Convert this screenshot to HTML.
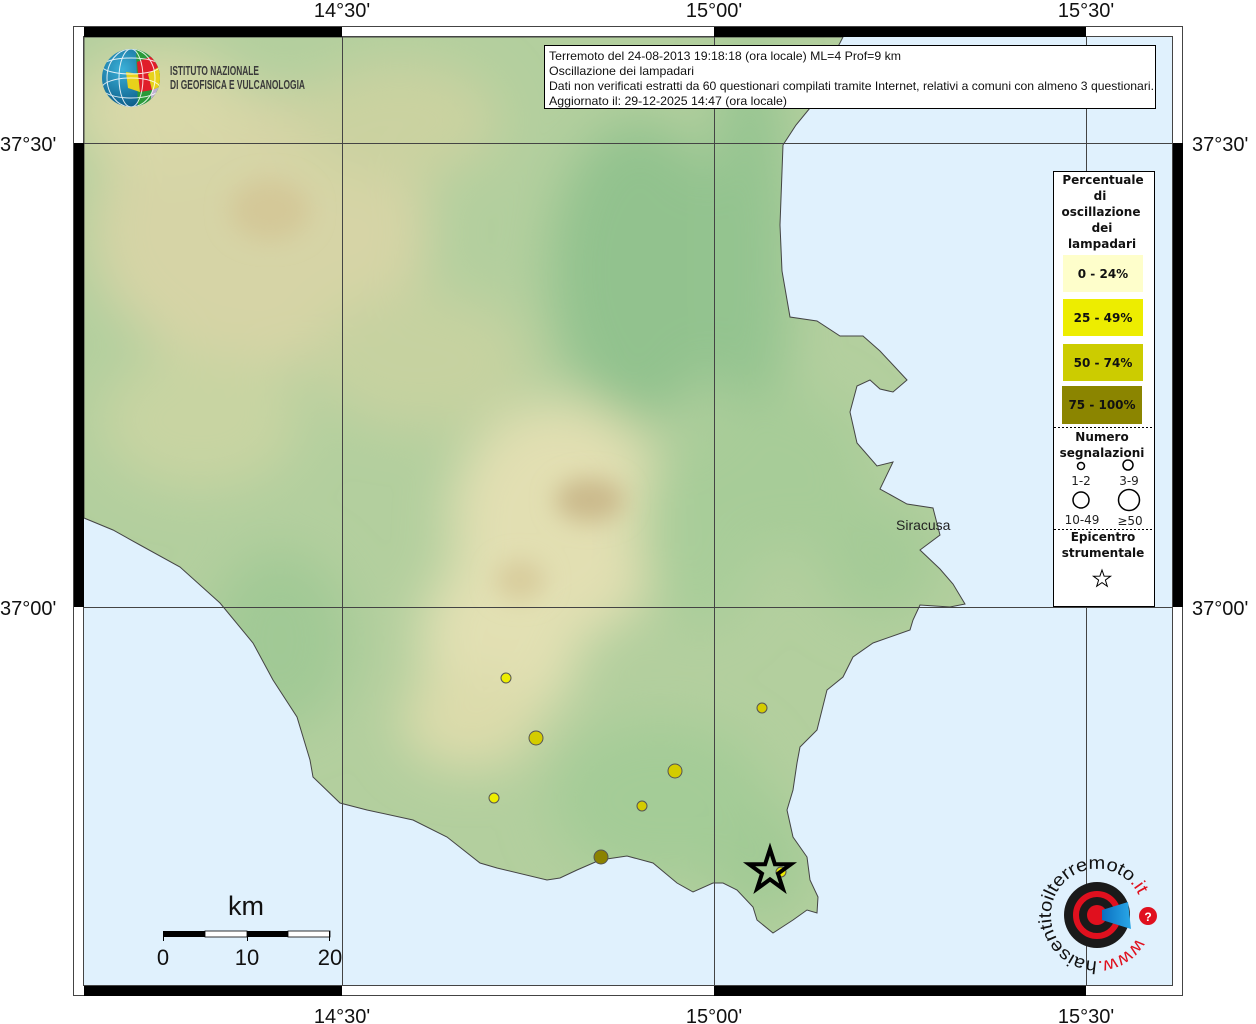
<!DOCTYPE html>
<html><head><meta charset="utf-8"><style>
html,body{margin:0;padding:0;background:#fff;}
svg{display:block;}
text{font-family:"Liberation Sans","DejaVu Sans",sans-serif;}
.dj text{font-family:"DejaVu Sans",sans-serif;}
</style></head><body>
<svg width="1256" height="1024" viewBox="0 0 1256 1024" xmlns="http://www.w3.org/2000/svg">
<defs>
<clipPath id="land"><path id="landp" d="M84,37 L843,37 L826,70 L810,108 L796,125 L783,145 L780,225 L782,271 L790,317 L817,321 L840,336 L863,336 L880,351 L907,380 L893,392 L880,389 L870,380 L857,386 L850,412 L857,443 L877,466 L893,462 L880,489 L907,504 L933,508 L940,535 L920,550 L940,569 L953,584 L965,604 L950,607 L920,605 L913,620 L910,630 L873,643 L853,657 L843,677 L827,690 L817,730 L800,747 L797,763 L793,790 L787,810 L793,837 L807,857 L810,880 L818,897 L817,913 L807,910 L793,920 L773,933 L757,920 L753,907 L737,890 L723,883 L713,883 L693,892 L677,883 L653,863 L627,856 L600,860 L577,870 L560,878 L547,880 L497,868 L480,863 L447,837 L413,820 L367,810 L340,803 L313,777 L310,760 L297,717 L273,680 L253,643 L220,603 L180,567 L140,545 L113,530 L84,518 Z"/></clipPath>
<filter id="bl" x="-50%" y="-50%" width="200%" height="200%"><feGaussianBlur stdDeviation="25"/></filter>
<filter id="bl2" x="-50%" y="-50%" width="200%" height="200%"><feGaussianBlur stdDeviation="12"/></filter>
<radialGradient id="globe" cx="35%" cy="35%" r="70%"><stop offset="0" stop-color="#3bb0d8"/><stop offset="1" stop-color="#0a5a86"/></radialGradient>
<linearGradient id="cone" x1="0" y1="0" x2="1" y2="0"><stop offset="0" stop-color="#0a6fc0"/><stop offset="1" stop-color="#2aa8e8"/></linearGradient>
<path id="ring" d="M1137,938 A46,46 0 1 1 1057,892 A46,46 0 1 1 1137,938"/>
</defs>
<rect x="84" y="37" width="1089" height="949" fill="#e0f1fd"/>
<g clip-path="url(#land)">
<rect x="84" y="37" width="950" height="950" fill="#b3cf9e"/>
<g filter="url(#bl)">
<ellipse cx="260" cy="230" rx="170" ry="140" fill="#d6d4a6"/>
<ellipse cx="160" cy="110" rx="90" ry="60" fill="#d8d8a8"/>
<ellipse cx="400" cy="120" rx="100" ry="60" fill="#cad2a0"/>
<ellipse cx="640" cy="270" rx="90" ry="150" fill="#92c28e"/>
<ellipse cx="750" cy="260" rx="40" ry="220" fill="#94c490"/>
<ellipse cx="420" cy="360" rx="110" ry="70" fill="#c6d2a0"/>
<ellipse cx="200" cy="420" rx="100" ry="70" fill="#c8d4a2"/>
<ellipse cx="560" cy="520" rx="110" ry="120" fill="#e2dfb2"/>
<ellipse cx="500" cy="640" rx="80" ry="90" fill="#e2e0b3"/>
<ellipse cx="470" cy="720" rx="70" ry="50" fill="#dcdbab"/>
<ellipse cx="280" cy="640" rx="70" ry="90" fill="#a1c995"/>
<ellipse cx="700" cy="530" rx="60" ry="100" fill="#a9cd9a"/>
<ellipse cx="780" cy="470" rx="90" ry="80" fill="#a7cc98"/>
<ellipse cx="660" cy="800" rx="110" ry="80" fill="#a4cc97"/>
<ellipse cx="760" cy="860" rx="50" ry="60" fill="#a2ca95"/>
<ellipse cx="880" cy="560" rx="60" ry="60" fill="#a5cb97"/>
</g>
<g filter="url(#bl2)">
<ellipse cx="590" cy="500" rx="35" ry="22" fill="#cbba8c"/>
<ellipse cx="270" cy="210" rx="40" ry="30" fill="#d4c898"/>
<ellipse cx="520" cy="580" rx="25" ry="20" fill="#d8cc9c"/>
</g>
</g>
<use href="#landp" fill="none" stroke="#444" stroke-width="1"/>
<g stroke="#444" stroke-width="1">
<line x1="342.5" y1="37" x2="342.5" y2="986"/><line x1="714.5" y1="37" x2="714.5" y2="986"/><line x1="1086.5" y1="37" x2="1086.5" y2="986"/>
<line x1="84" y1="143.5" x2="1173" y2="143.5"/><line x1="84" y1="607.5" x2="1173" y2="607.5"/>
</g>
<rect x="73.5" y="26.5" width="1109" height="969" fill="none" stroke="#444"/>
<rect x="83.5" y="36.5" width="1089" height="949" fill="none" stroke="#444"/>
<g fill="#000">
<rect x="84" y="27" width="258" height="10"/><rect x="714" y="27" width="372" height="10"/>
<rect x="84" y="986" width="258" height="10"/><rect x="714" y="986" width="372" height="10"/>
<rect x="74" y="143" width="10" height="464"/><rect x="1173" y="143" width="10" height="464"/>
</g>
<g font-size="20" fill="#111" text-anchor="middle">
<text x="342" y="17">14°30'</text><text x="714" y="17">15°00'</text><text x="1086" y="17">15°30'</text>
<text x="342" y="1023">14°30'</text><text x="714" y="1023">15°00'</text><text x="1086" y="1023">15°30'</text>
</g>
<g font-size="20" fill="#111">
<text x="0" y="151">37°30'</text><text x="0" y="615">37°00'</text>
<text x="1192" y="151">37°30'</text><text x="1192" y="615">37°00'</text>
</g>
<g>
<circle cx="131" cy="78" r="29" fill="url(#globe)"/>
<clipPath id="gc"><circle cx="131" cy="78" r="29"/></clipPath>
<g clip-path="url(#gc)">
<path d="M136,49 L160,52 L160,104 L138,110 Z" fill="#2a9a3a"/>
<path d="M137,62 L152,56 L160,66 L148,74 L138,74 Z" fill="#e01d2a"/>
<path d="M138,74 L148,74 L152,90 L140,92 Z" fill="#e01d2a"/>
<path d="M148,74 L160,66 L162,86 L152,90 Z" fill="#e8d21a"/>
<path d="M152,56 L162,58 L162,66 L160,66 Z" fill="#b7a4c8"/>
<path d="M152,90 L162,86 L162,100 L150,104 Z" fill="#c0b0d0"/>
<path d="M126,72 L138,74 L140,92 L128,88 Z" fill="#e8d21a"/>
</g>
<g fill="none" stroke="#fff" stroke-width="1" opacity="0.85" clip-path="url(#gc)">
<ellipse cx="131" cy="78" rx="12" ry="29"/><ellipse cx="131" cy="78" rx="24" ry="29"/>
<ellipse cx="131" cy="66" rx="29" ry="8"/><ellipse cx="131" cy="88" rx="29" ry="10"/>
</g>
<text x="170" y="75" font-size="13" font-weight="bold" fill="#3a3a3a" textLength="89" lengthAdjust="spacingAndGlyphs">ISTITUTO NAZIONALE</text>
<text x="170" y="89" font-size="13" font-weight="bold" fill="#3a3a3a" textLength="135" lengthAdjust="spacingAndGlyphs">DI GEOFISICA E VULCANOLOGIA</text>
</g>
<rect x="544.5" y="45.5" width="611" height="63" fill="#fff" stroke="#000"/>
<g font-size="12" fill="#111">
<text x="549" y="60" textLength="352" lengthAdjust="spacingAndGlyphs">Terremoto del 24-08-2013 19:18:18 (ora locale) ML=4 Prof=9 km</text>
<text x="549" y="75" textLength="145" lengthAdjust="spacingAndGlyphs">Oscillazione dei lampadari</text>
<text x="549" y="90" textLength="605" lengthAdjust="spacingAndGlyphs">Dati non verificati estratti da 60 questionari compilati tramite Internet, relativi a comuni con almeno 3 questionari.</text>
<text x="549" y="105" textLength="238" lengthAdjust="spacingAndGlyphs">Aggiornato il: 29-12-2025 14:47 (ora locale)</text>
</g>
<text x="896" y="530" font-size="14" fill="#222">Siracusa</text>
<g stroke="#555" stroke-width="1">
<circle cx="781" cy="872" r="5" fill="#eaea00"/>
<circle cx="506" cy="678" r="5" fill="#eded00"/>
<circle cx="536" cy="738" r="7" fill="#d4cc00"/>
<circle cx="494" cy="798" r="5" fill="#eded00"/>
<circle cx="642" cy="806" r="5" fill="#d4cc00"/>
<circle cx="675" cy="771" r="7" fill="#d4cc00"/>
<circle cx="762" cy="708" r="5" fill="#d4cc00"/>
<circle cx="601" cy="857" r="7" fill="#8b8200"/>
</g>
<polygon points="770,849 774.9,864.2 790.9,864.2 778,873.6 782.9,888.8 770,879.4 757.1,888.8 762,873.6 749.1,864.2 765.1,864.2" fill="none" stroke="#000" stroke-width="4"/>
<rect x="1053.5" y="171.5" width="101" height="435" fill="#fff" stroke="#000"/>
<g class="dj" font-size="12" font-weight="bold" fill="#111" text-anchor="middle">
<text x="1103" y="184">Percentuale</text>
<text x="1100" y="200">di</text>
<text x="1101" y="216">oscillazione</text>
<text x="1102" y="232">dei</text>
<text x="1102" y="248">lampadari</text>
</g>
<rect x="1063" y="255" width="80" height="37" fill="#fefecb"/>
<rect x="1063" y="299" width="80" height="37" fill="#eded00"/>
<rect x="1063" y="344" width="80" height="37" fill="#cccc00"/>
<rect x="1062" y="386" width="80" height="38" fill="#8b8500"/>
<g class="dj" font-size="12" font-weight="bold" fill="#111" text-anchor="middle">
<text x="1103" y="278">0 - 24%</text>
<text x="1103" y="322">25 - 49%</text>
<text x="1103" y="367">50 - 74%</text>
<text x="1102" y="409">75 - 100%</text>
<text x="1102" y="441">Numero</text>
<text x="1102" y="457">segnalazioni</text>
<text x="1103" y="541">Epicentro</text>
<text x="1103" y="557">strumentale</text>
</g>
<line x1="1054" y1="427.5" x2="1154" y2="427.5" stroke="#000" stroke-dasharray="2,2"/>
<line x1="1054" y1="529.5" x2="1154" y2="529.5" stroke="#000" stroke-dasharray="2,2"/>
<g fill="none" stroke="#000" stroke-width="1.5">
<circle cx="1081" cy="466" r="3.5"/><circle cx="1128" cy="465" r="5"/>
<circle cx="1081" cy="500" r="8"/><circle cx="1129" cy="500" r="10.5"/>
</g>
<g class="dj" font-size="12" fill="#222" text-anchor="middle">
<text x="1081" y="485">1-2</text><text x="1129" y="485">3-9</text>
<text x="1082" y="524">10-49</text><text x="1130" y="525">≥50</text>
</g>
<polygon points="1102,570 1104.1,576.1 1110.6,576.2 1105.4,580.1 1107.3,586.3 1102,582.6 1096.7,586.3 1098.6,580.1 1093.4,576.2 1099.9,576.1" fill="#fff" stroke="#000" stroke-width="1"/>
<text x="246" y="915" font-size="27" fill="#111" text-anchor="middle">km</text>
<rect x="163" y="931" width="42" height="6" fill="#000"/><rect x="205" y="931" width="42" height="6" fill="#fff" stroke="#000" stroke-width="0.8"/>
<rect x="247" y="931" width="41" height="6" fill="#000"/><rect x="288" y="931" width="42" height="6" fill="#fff" stroke="#000" stroke-width="0.8"/>
<g stroke="#000"><line x1="163.5" y1="931" x2="163.5" y2="941"/><line x1="247.5" y1="931" x2="247.5" y2="941"/><line x1="329.5" y1="931" x2="329.5" y2="941"/></g>
<g font-size="22" fill="#111" text-anchor="middle"><text x="163" y="965">0</text><text x="247" y="965">10</text><text x="330" y="965">20</text></g>
<g>
<circle cx="1097" cy="915" r="33" fill="#1a1a1a"/>
<circle cx="1097" cy="915" r="21" fill="none" stroke="#e0101e" stroke-width="6"/>
<circle cx="1097" cy="915" r="10" fill="#e0101e"/>
<path d="M1102,910 L1128,902 L1131,929 L1102,920 Z" fill="url(#cone)"/>
<circle cx="1148" cy="916" r="9" fill="#e0101e"/>
<text x="1148" y="921" font-size="12" font-weight="bold" fill="#fff" text-anchor="middle">?</text>
<text font-size="18" fill="#111"><textPath href="#ring" textLength="245" lengthAdjust="spacingAndGlyphs"><tspan fill="#e0101e">www.</tspan>haisentitoilterremoto<tspan fill="#e0101e">.it</tspan></textPath></text>
</g>
</svg>
</body></html>
